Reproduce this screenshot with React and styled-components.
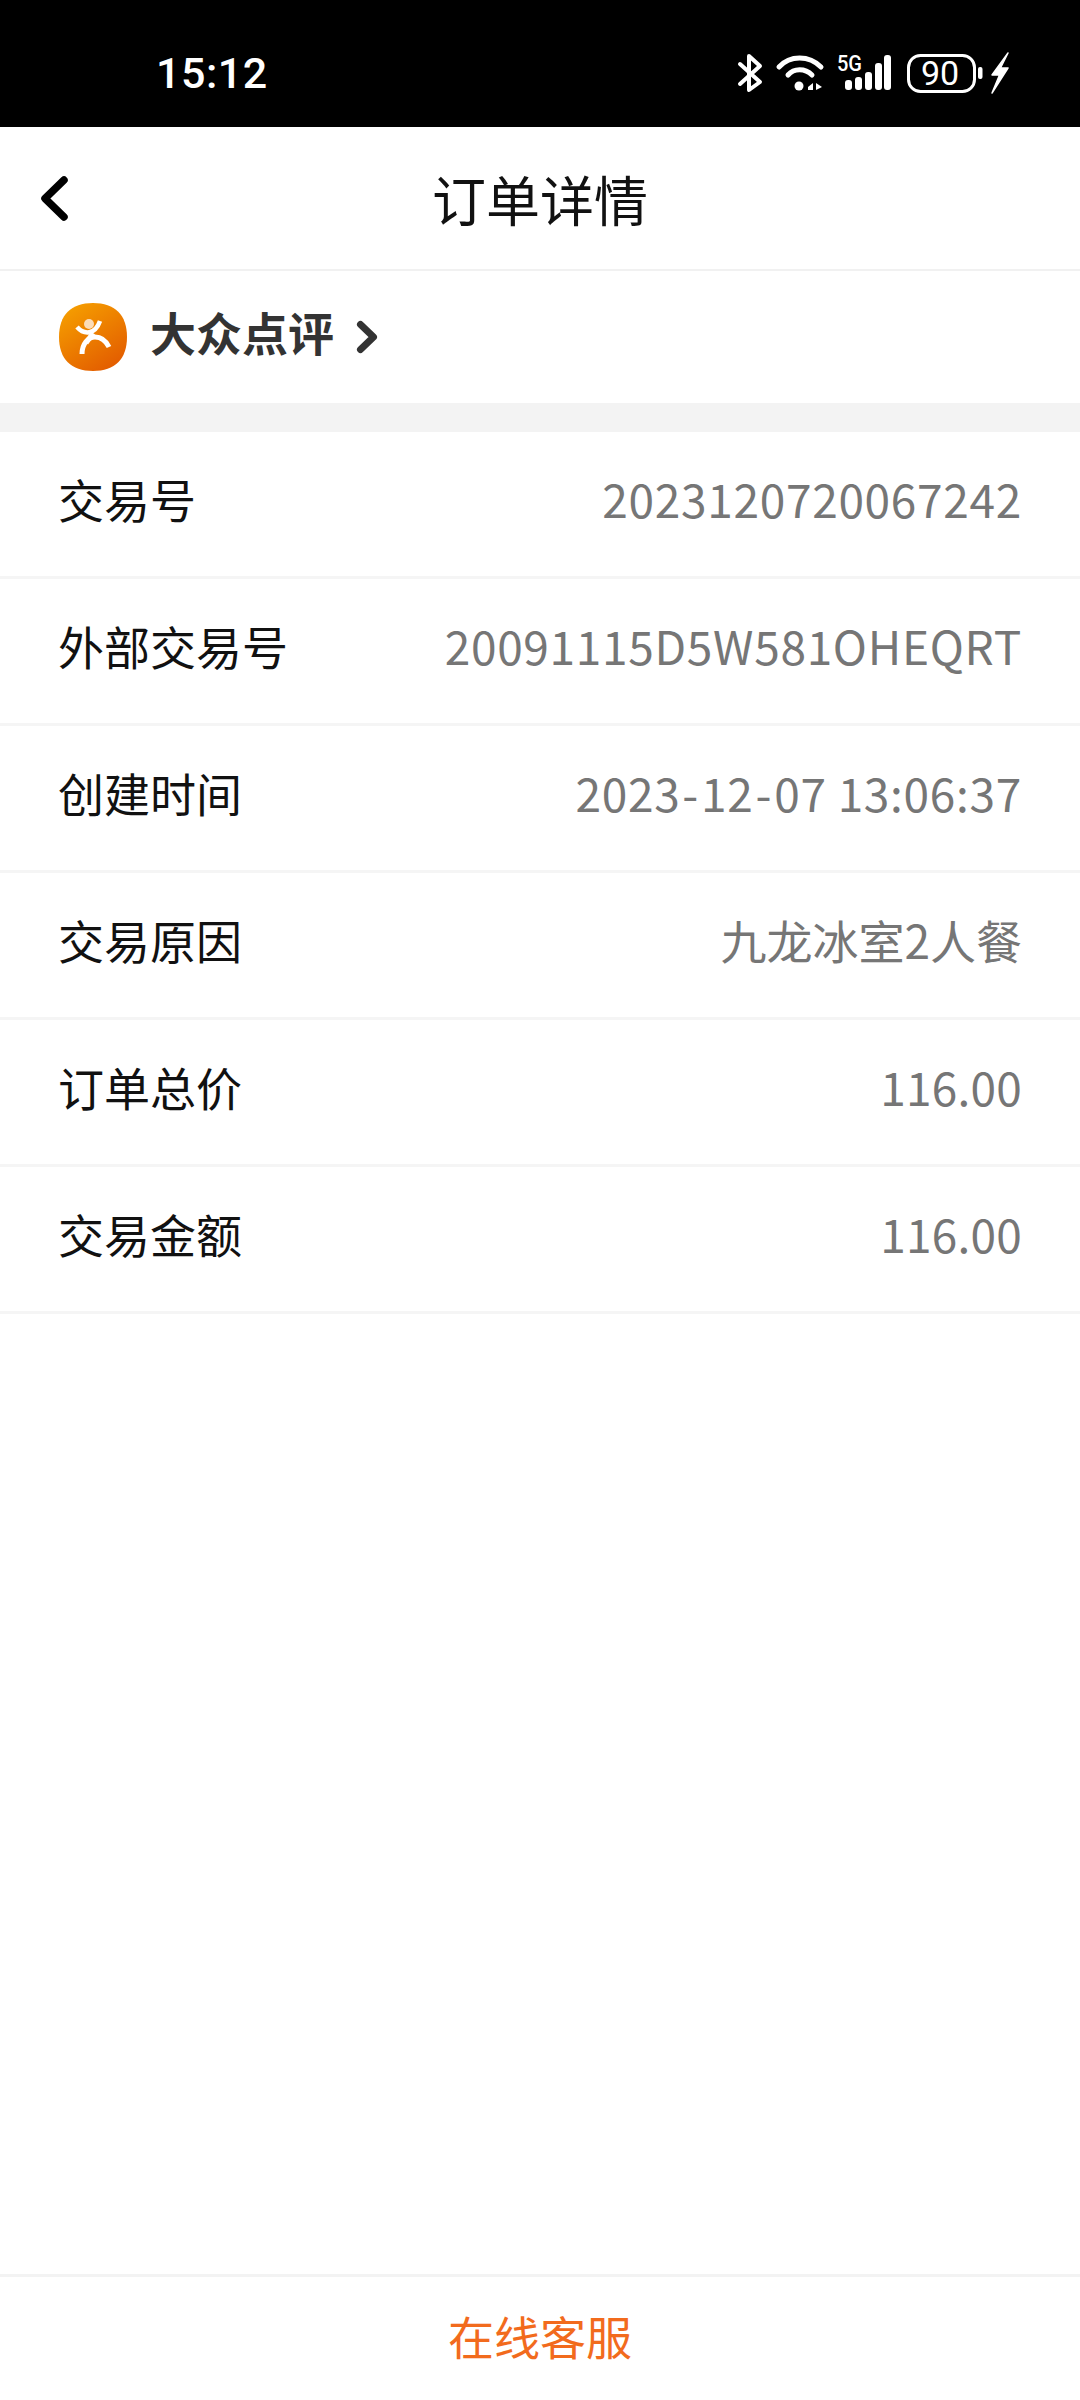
import React from 'react';
import styled, { createGlobalStyle } from 'styled-components';

const GlobalStyle = createGlobalStyle`
  html, body {
    margin: 0;
    padding: 0;
    background: #fff;
  }
  * {
    box-sizing: border-box;
  }
`;

const Page = styled.div`
  width: 1080px;
  height: 2400px;
  display: flex;
  flex-direction: column;
  background: #fff;
  font-family: "Noto Sans CJK SC", "Noto Sans", sans-serif;
`;

const StatusBar = styled.div`
  height: 127px;
  flex: none;
  background: #000;
  color: #fff;
  display: flex;
  align-items: center;
  justify-content: space-between;
  padding: 19px 65px 0 156px;
`;

const Clock = styled.span`
  font-family: Roboto, sans-serif;
  font-size: 43px;
  font-weight: 500;
  letter-spacing: 0.5px;
`;

const StatusIcons = styled.svg`
  width: 285px;
  height: 46px;
  display: block;
`;

const NavBar = styled.div`
  height: 144px;
  flex: none;
  display: flex;
  align-items: center;
  justify-content: center;
  position: relative;
  border-bottom: 2px solid #f1f1f1;
`;

const BackIcon = styled.svg`
  position: absolute;
  left: 36px;
  top: 46px;
  width: 36px;
  height: 52px;
`;

const NavTitle = styled.h1`
  margin: 0;
  font-size: 54px;
  font-weight: 400;
  color: #111;
`;

const MerchantRow = styled.div`
  height: 132px;
  flex: none;
  display: flex;
  align-items: center;
  padding-left: 58px;
`;

const MerchantLogo = styled.svg`
  width: 70px;
  height: 70px;
  margin-right: 22px;
`;

const MerchantName = styled.span`
  font-size: 46px;
  font-weight: 700;
  color: #333;
  padding-bottom: 12px;
`;

const MerchantArrow = styled.svg`
  width: 26px;
  height: 36px;
  margin-left: 20px;
`;

const Gap = styled.div`
  height: 29px;
  flex: none;
  background: #f3f3f3;
`;

const InfoList = styled.div`
  flex: 1;
`;

const InfoRow = styled.div`
  height: 147px;
  display: flex;
  align-items: center;
  justify-content: space-between;
  padding: 0 58px 12px;
  border-bottom: 3px solid #f5f5f5;
`;

const Label = styled.span`
  font-size: 46px;
  color: #111;
`;

const Value = styled.span`
  font-size: 46px;
  letter-spacing: ${(props) => props.$tracking}px;
  color: #767676;
`;

const Dash = styled.span`
  padding: 0 2px;
`;

const Footer = styled.div`
  height: 126px;
  flex: none;
  display: flex;
  align-items: center;
  justify-content: center;
  border-top: 3px solid #f3f3f3;
  padding-bottom: 7px;
  font-size: 46px;
  color: #f26b1d;
`;

const rows = [
  { label: '交易号', value: '2023120720067242', tracking: 0.7 },
  { label: '外部交易号', value: '20091115D5W581OHEQRT', tracking: 0.7 },
  { label: '创建时间', value: <>2023<Dash>-</Dash>12<Dash>-</Dash>07 13:06:37</>, tracking: 0.7 },
  { label: '交易原因', value: '九龙冰室2人餐', tracking: 0 },
  { label: '订单总价', value: '116.00', tracking: 0.2 },
  { label: '交易金额', value: '116.00', tracking: 0.2 },
];

export default function App() {
  return (
    <Page>
      <GlobalStyle />
      <StatusBar>
        <Clock>15:12</Clock>
        <StatusIcons viewBox="730 50 285 46">
          {/* bluetooth */}
          <path d="M740 64 L760 82 L749 90 L749 56 L760 66 L740 84" fill="none" stroke="#fff" strokeWidth="4" strokeLinecap="round" strokeLinejoin="round" />
          {/* wifi */}
          <g fill="none" stroke="#fff" strokeWidth="5" strokeLinecap="round">
            <path d="M779 67 C790 55 809 55 821 67" />
            <path d="M788 75 C794 68 805 68 812 75" />
          </g>
          <circle cx="799" cy="86" r="4.5" fill="#fff" />
          <path d="M808 87 L813 83 L813 90 L808 90Z M816 83 L822 87 L816 90Z" fill="#fff" />
          {/* mobile signal */}
          <text x="837" y="71" fontFamily="Roboto, sans-serif" fontSize="22" fontWeight="500" fill="#fff" textLength="25" lengthAdjust="spacingAndGlyphs">5G</text>
          <g fill="#fff">
            <rect x="845" y="80" width="7" height="10" rx="3" />
            <rect x="855" y="77" width="7" height="13" rx="3" />
            <rect x="865" y="72" width="7" height="18" rx="3" />
            <rect x="875" y="63" width="7" height="27" rx="3" />
            <rect x="884" y="55" width="7" height="35" rx="3" />
          </g>
          {/* battery */}
          <rect x="908.5" y="55.5" width="66" height="36" rx="12" fill="none" stroke="#fff" strokeWidth="3" />
          <text x="940" y="85" textAnchor="middle" fontFamily="Roboto, sans-serif" fontSize="34" fontWeight="400" fill="#fff">90</text>
          <rect x="978" y="67" width="4.5" height="12" rx="2" fill="#fff" />
          <path d="M1008 53 L992 75 L999.5 75 L992 93 L1008 68 L1000.5 68 Z" fill="#fff" stroke="#fff" strokeWidth="1.5" strokeLinejoin="round" />
        </StatusIcons>
      </StatusBar>

      <NavBar>
        <BackIcon viewBox="0 0 36 52">
          <path d="M28 7 L9 25.5 L28 44" fill="none" stroke="#000" strokeWidth="7.5" strokeLinecap="round" strokeLinejoin="round" />
        </BackIcon>
        <NavTitle>订单详情</NavTitle>
      </NavBar>

      <MerchantRow>
        <MerchantLogo viewBox="0 0 70 70">
          <defs>
            <linearGradient id="logoFill" x1="0.15" y1="0" x2="0.8" y2="1">
              <stop offset="0" stopColor="#f6a000" />
              <stop offset="1" stopColor="#e25a00" />
            </linearGradient>
          </defs>
          <path d="M35 1 C57 1 69 13 69 35 C69 57 57 69 35 69 C13 69 1 57 1 35 C1 13 13 1 35 1Z" fill="url(#logoFill)" />
          <circle cx="31" cy="22" r="5" fill="#fbdcb8" />
          <g fill="none" stroke="#fff">
            <path d="M19 25 C26 33 37 33 42 19" strokeWidth="4.5" />
            <path d="M35 31 L28 41" strokeWidth="5" />
            <path d="M24 52 C24 42 30 35 37 35 C43 35 48 39 51 45" strokeWidth="5" />
          </g>
        </MerchantLogo>
        <MerchantName>大众点评</MerchantName>
        <MerchantArrow viewBox="0 0 26 36">
          <path d="M6.5 5.5 L19.5 18 L6.5 30.5" fill="none" stroke="#333" strokeWidth="7" strokeLinecap="round" strokeLinejoin="round" />
        </MerchantArrow>
      </MerchantRow>

      <Gap />

      <InfoList>
        {rows.map((row) => (
          <InfoRow key={row.label}>
            <Label>{row.label}</Label>
            <Value $tracking={row.tracking}>{row.value}</Value>
          </InfoRow>
        ))}
      </InfoList>

      <Footer>在线客服</Footer>
    </Page>
  );
}
